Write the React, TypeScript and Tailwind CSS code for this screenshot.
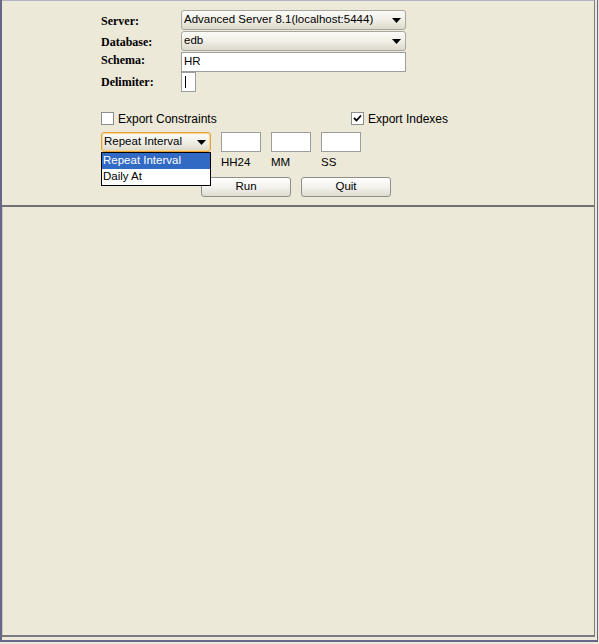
import React from 'react';

const ui = { fontFamily: '"Liberation Sans", Arial, sans-serif' };
const label = { fontFamily: '"Liberation Serif", "Times New Roman", serif' };

const Arrow = () => (
    <svg width="9" height="5" viewBox="0 0 9 5" className="shrink-0">
        <path d="M0 0 L9 0 L4.5 5 Z" fill="#000" />
    </svg>
);

const Combo = ({ text, width, focused }: { text: string; width: string; focused?: boolean }) => (
    <div
        className={`${width} h-[20px] flex items-center justify-between pl-[2px] pr-[4px] rounded-[3px] border bg-gradient-to-b from-[#fbfbf8] via-[#f1efe6] to-[#dcd9ca] text-[11.5px] text-black ${focused ? 'border-[#e3a43c] shadow-[inset_0_0_0_1px_#f8d38b]' : 'border-[#a7a6a0]'}`}
    >
        <span className="leading-none truncate">{text}</span>
        <Arrow />
    </div>
);

const Field = ({ width, children }: { width: string; children?: React.ReactNode }) => (
    <div className={`${width} h-[20px] bg-white border border-[#9d9d9d] flex items-center px-[2px] text-[11.5px] leading-none`}>
        {children}
    </div>
);

const Check = ({ checked }: { checked?: boolean }) => (
    <div className="w-[13px] h-[13px] bg-white border border-[#8e8e8e] flex items-center justify-center">
        {checked && (
            <svg width="9" height="9" viewBox="0 0 9 9">
                <path d="M1 4 L3.5 6.5 L8 1.5" stroke="#000" strokeWidth="1.8" fill="none" />
            </svg>
        )}
    </div>
);

const Button = ({ text }: { text: string }) => (
    <div className="w-[90px] h-[20px] rounded-[3px] border border-[#8f8f8a] bg-gradient-to-b from-[#ffffff] via-[#f3f2ee] to-[#dedbd0] flex items-center justify-center text-[11.5px] text-black">
        {text}
    </div>
);

export default function App() {
    return (
        <div className="w-[599px] h-[644px] bg-[#ECE9D8] overflow-hidden" style={ui}>
            <div className="w-[598px] h-[642px] border-l-2 border-r border-b-2 border-[#66668a] pr-[2px] pb-[3px] flex flex-col">
                <div className="flex-1 flex flex-col border-t border-t-[#b4b3c4] border-r border-r-[#7c7c7c] border-b-2 border-b-[#7a7a80]">
                    {/* form */}
                    <div className="relative h-[204px] pl-[99px] pt-[9px] flex flex-col">
                        <div className="flex items-center h-[20px]">
                            <div className="w-[80px] text-[12px] font-bold mt-[1px]" style={label}>Server:</div>
                            <Combo text="Advanced Server 8.1(localhost:5444)" width="w-[225px]" />
                        </div>
                        <div className="flex items-center h-[20px] mt-[1px]">
                            <div className="w-[80px] text-[12px] font-bold mt-[1px]" style={label}>Database:</div>
                            <Combo text="edb" width="w-[225px]" />
                        </div>
                        <div className="flex items-center h-[20px] mt-[1px]">
                            <div className="w-[80px] text-[12px] font-bold -mt-[5px]" style={label}>Schema:</div>
                            <Field width="w-[225px]">HR</Field>
                        </div>
                        <div className="flex items-center h-[20px]">
                            <div className="w-[80px] text-[12px] font-bold" style={label}>Delimiter:</div>
                            <Field width="w-[15px]">
                                <span className="w-px h-[12px] bg-black ml-[1px]" />
                            </Field>
                        </div>

                        <div className="flex items-center h-[13px] mt-[20px] text-[12px]">
                            <Check />
                            <span className="ml-[4px] w-[233px]">Export Constraints</span>
                            <Check checked />
                            <span className="ml-[4px]">Export Indexes</span>
                        </div>

                        <div className="flex items-center mt-[7px] gap-[10px]">
                            <Combo text="Repeat Interval" width="w-[110px]" focused />
                            <Field width="w-[40px]" />
                            <Field width="w-[40px]" />
                            <Field width="w-[40px]" />
                        </div>
                        <div className="flex text-[11.5px] leading-[14px] mt-[3px] pl-[120px]">
                            <span className="w-[50px]">HH24</span>
                            <span className="w-[50px]">MM</span>
                            <span>SS</span>
                        </div>
                        <div className="flex gap-[10px] mt-[8px] pl-[100px]">
                            <Button text="Run" />
                            <Button text="Quit" />
                        </div>

                        {/* open combo list */}
                        <div className="absolute left-[99px] top-[151px] w-[110px] bg-white border border-black text-[11.5px]">
                            <div className="h-[16px] bg-[#316AC5] text-white flex items-center px-[1px]">Repeat Interval</div>
                            <div className="h-[16px] flex items-center px-[1px]">Daily At</div>
                        </div>
                    </div>
                    <div className="h-[2px] bg-[#717171]" />
                    <div className="flex-1 border-l border-[#c9c8c0]" />
                </div>
            </div>
        </div>
    );
}
